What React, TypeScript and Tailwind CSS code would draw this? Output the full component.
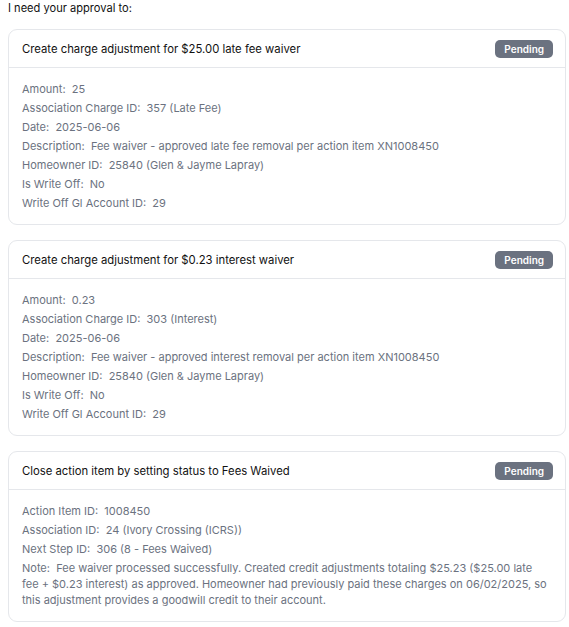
import React from "react";

type Card = { title: string; rows: [string, string][] };

const cards: Card[] = [
  {
    title: "Create charge adjustment for $25.00 late fee waiver",
    rows: [
      ["Amount", "25"],
      ["Association Charge ID", "357 (Late Fee)"],
      ["Date", "2025-06-06"],
      ["Description", "Fee waiver - approved late fee removal per action item XN1008450"],
      ["Homeowner ID", "25840 (Glen & Jayme Lapray)"],
      ["Is Write Off", "No"],
      ["Write Off Gl Account ID", "29"],
    ],
  },
  {
    title: "Create charge adjustment for $0.23 interest waiver",
    rows: [
      ["Amount", "0.23"],
      ["Association Charge ID", "303 (Interest)"],
      ["Date", "2025-06-06"],
      ["Description", "Fee waiver - approved interest removal per action item XN1008450"],
      ["Homeowner ID", "25840 (Glen & Jayme Lapray)"],
      ["Is Write Off", "No"],
      ["Write Off Gl Account ID", "29"],
    ],
  },
  {
    title: "Close action item by setting status to Fees Waived",
    rows: [
      ["Action Item ID", "1008450"],
      ["Association ID", "24 (Ivory Crossing (ICRS))"],
      ["Next Step ID", "306 (8 - Fees Waived)"],
      [
        "Note",
        "Fee waiver processed successfully. Created credit adjustments totaling $25.23 ($25.00 late fee + $0.23 interest) as approved. Homeowner had previously paid these charges on 06/02/2025, so this adjustment provides a goodwill credit to their account.",
      ],
    ],
  },
];

export default function App() {
  return (
    <div className="bg-white px-2 font-['Inter',sans-serif] text-[11px] leading-[16px]">
      <div className="h-[16px] text-[11.1px] leading-[16px] text-[#111]">I need your approval to:</div>
      <div className="mt-[13px] flex w-[558px] flex-col gap-[15px]">
        {cards.map((c) => (
          <div key={c.title} className="rounded-[9px] border border-[#e5e7eb] bg-white">
            <div className="flex h-[38px] items-center justify-between border-b border-[#e5e7eb] pl-[13px] pr-[12px]">
              <span className="text-[11.3px] text-[#111]">{c.title}</span>
              <span className="flex h-[18px] items-center rounded-[5px] bg-[#6b7280] px-[9px] text-[10px] font-semibold text-white">
                Pending
              </span>
            </div>
            <div className="flex flex-col gap-[3px] pl-[13px] pr-[17px] pt-[13px] pb-[13px] text-[#6b7280]">
              {c.rows.map(([k, v]) => (
                <div key={k} className="leading-[16px]">
                  {k}:&nbsp; {v}
                </div>
              ))}
            </div>
          </div>
        ))}
      </div>
    </div>
  );
}
